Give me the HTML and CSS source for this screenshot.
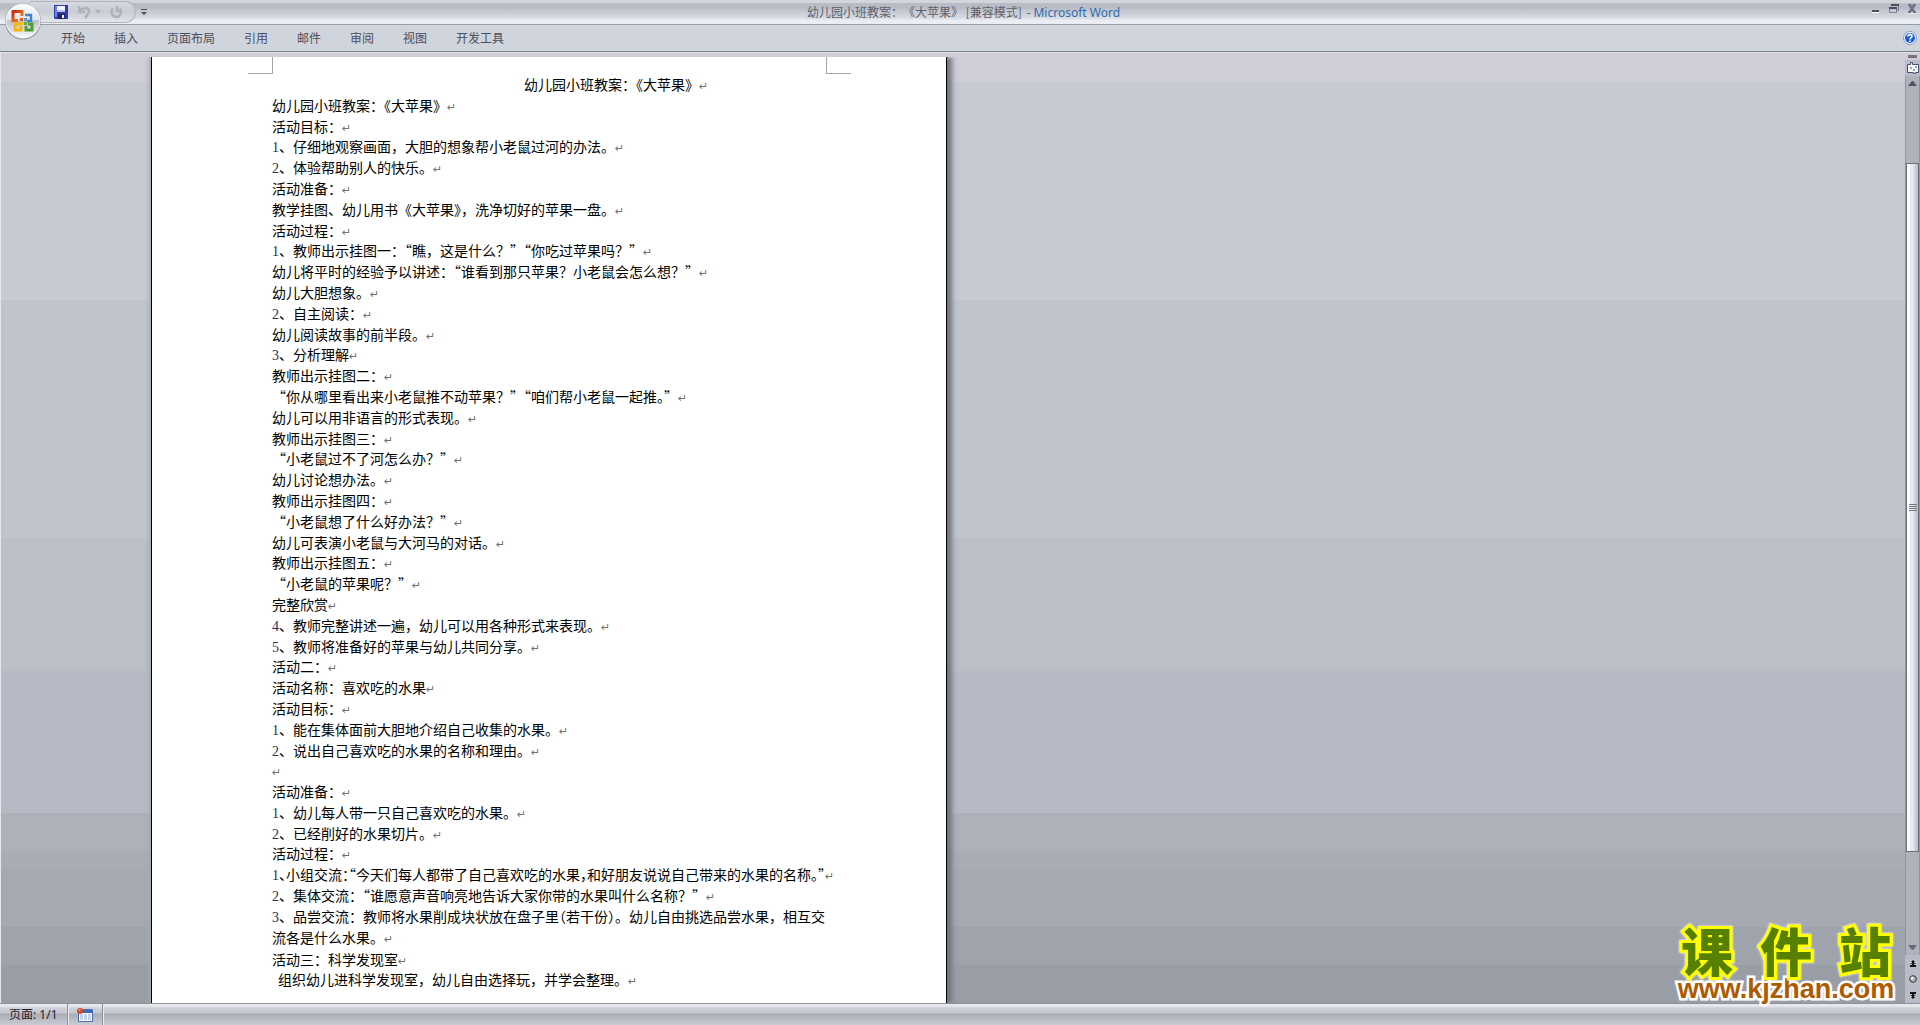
FILE: index.html
```html
<!DOCTYPE html>
<html lang="zh-CN">
<head>
<meta charset="utf-8">
<title>幼儿园小班教案：《大苹果》 [兼容模式] - Microsoft Word</title>
<link rel="stylesheet" href="styles.css">
</head>
<body>
<div class="app">
  <header class="titlebar">
    <div class="quick">
      <button class="tool" aria-label="保存"><svg width="14" height="14" viewBox="0 0 14 14"><path d="M0 0h14v14H1l-1-1z" fill="#2b3ba8"/><path d="M1 1h2v11H1z" fill="#6f82e0"/><path d="M3 1h8v6H3z" fill="#f2f5ff"/><path d="M3 5h8v2H3z" fill="#b9c6f0"/><path d="M4 9h7v5H4z" fill="#1b2468"/><path d="M8 10h2v3H8z" fill="#fff"/></svg></button>
      <button class="tool undo" aria-label="撤消"><svg width="13" height="14" viewBox="0 0 13 14"><path d="M1 1v6h6M1.500 6.500C5 1.500 11 2 11 6c0 3-2 4-4 7" fill="none" stroke="#aeb2bc" stroke-width="2.500"/></svg></button>
      <button class="tool arrow" aria-label="撤消列表"><svg width="6" height="4" viewBox="0 0 6 4"><path d="M0 0h6L3 4z" fill="#aeb2bc"/></svg></button>
      <button class="tool redo" aria-label="重复"><svg width="13" height="14" viewBox="0 0 13 14"><path d="M2.500 3C0 8 3 12 6.500 12S13 7 9.500 3.500M7 1v5h5" fill="none" stroke="#aeb2bc" stroke-width="2.500"/></svg></button>
    </div>
    <button class="tool more" aria-label="自定义快速访问工具栏"><svg width="6" height="7" viewBox="0 0 6 7"><path d="M0 0h6v1H0zM0 3h6L3 6z" fill="#4b4f58"/></svg></button>
    <h1 class="caption">幼儿园小班教案：《大苹果》 [兼容模式] <span class="brand">- Microsoft Word</span></h1>
    <div class="controls">
      <button class="tool" aria-label="最小化"><svg width="10" height="10" viewBox="0 0 10 10"><path d="M1 8h7v1H1z" fill="#fff"/><path d="M1 6h7v2H1z" fill="#4b4e56"/></svg></button>
      <button class="tool" aria-label="还原"><svg width="10" height="10" viewBox="0 0 10 10"><path d="M2.500 1.500h7v5h-2M.5 3.500h7v5h-7z" fill="none" stroke="#7380a0"/><path d="M2 0h8v2H2zM0 3h8v2H0z" fill="#4d505b"/></svg></button>
      <button class="tool" aria-label="关闭"><svg width="10" height="10" viewBox="0 0 10 10"><path d="M1 10h3l1-2 1 2h4" stroke="#fff" fill="none"/><path d="M1 0h3l1 2 1-2h3v1L6.500 4.500 9 8v1H6L5 7 4 9H1V8l2.500-3.500L1 1z" fill="#6b7387"/></svg></button>
    </div>
    <button class="office" aria-label="Office 按钮">
      <svg width="38" height="38" viewBox="0 0 38 38">
        <defs>
          <linearGradient id="orb" x1="0" y1="0" x2="0" y2="1"><stop offset="0" stop-color="#fff"/><stop offset=".45" stop-color="#e4e5ea"/><stop offset=".5" stop-color="#bfc2cb"/><stop offset="1" stop-color="#fafafc"/></linearGradient>
          <linearGradient id="ra" x1="0" y1="0" x2="1" y2="1"><stop offset="0" stop-color="#c8290c"/><stop offset="1" stop-color="#f39021"/></linearGradient>
        </defs>
        <circle cx="19" cy="19.500" r="18" fill="#8c909a"/>
        <circle cx="19" cy="19" r="17" fill="url(#orb)" stroke="#f9f9fb"/>
        <g fill="none" stroke-width="3">
          <path d="M14 18.500H9V9.500h9v4.500" stroke="url(#ra)"/>
          <path d="M21 13h6v6h-4" stroke="#3f86cf" stroke-width="2.400"/>
          <path d="M16 22h-5v6h6v-4" stroke="#f5b512"/>
          <path d="M22 24v4h6v-6h-4" stroke="#4e9c3a"/>
        </g>
        <g><path d="M16 16h3v3h-3z" fill="#e2571b"/><path d="M20 16h3v3h-3z" fill="#5b9bdc"/><path d="M16 20h3v3h-3z" fill="#f3c11a"/><path d="M20 20h3v3h-3z" fill="#63ad45"/></g>
      </svg>
    </button>
  </header>

  <nav class="ribbon">
    <button class="tab">开始</button>
    <button class="tab">插入</button>
    <button class="tab">页面布局</button>
    <button class="tab">引用</button>
    <button class="tab">邮件</button>
    <button class="tab">审阅</button>
    <button class="tab">视图</button>
    <button class="tab">开发工具</button>
    <button class="tool help" aria-label="帮助"><svg width="14" height="14" viewBox="0 0 14 14"><circle cx="7" cy="7" r="6.500" fill="#f4f8ff" stroke="#7f9cc9"/><circle cx="7" cy="7" r="5" fill="#1f5fd6"/><path d="M5 5.500C5 3 9 3 9 5.300 9 6.800 7 6.500 7 8.500M7 9.500v1.500" fill="none" stroke="#fff" stroke-width="1.600"/></svg></button>
  </nav>

  <div class="workspace">
    <main class="desk">
      <article class="page">
        <div class="crop"><i class="corner left"></i><i class="corner right"></i></div>
        <div class="text">
          <p class="heading">幼儿园小班教案：《大苹果》</p>
          <p>幼儿园小班教案：《大苹果》</p>
          <p>活动目标：</p>
          <p><b>1</b>、仔细地观察画面，大胆的想象帮小老鼠过河的办法。</p>
          <p><b>2</b>、体验帮助别人的快乐。</p>
          <p>活动准备：</p>
          <p>教学挂图、幼儿用书《大苹果》，洗净切好的苹果一盘。</p>
          <p>活动过程：</p>
          <p><b>1</b>、教师出示挂图一：“瞧，这是什么？”“你吃过苹果吗？”</p>
          <p>幼儿将平时的经验予以讲述：“谁看到那只苹果？小老鼠会怎么想？”</p>
          <p>幼儿大胆想象。</p>
          <p><b>2</b>、自主阅读：</p>
          <p>幼儿阅读故事的前半段。</p>
          <p><b>3</b>、分析理解</p>
          <p>教师出示挂图二：</p>
          <p>“你从哪里看出来小老鼠推不动苹果？”“咱们帮小老鼠一起推。”</p>
          <p>幼儿可以用非语言的形式表现。</p>
          <p>教师出示挂图三：</p>
          <p>“小老鼠过不了河怎么办？”</p>
          <p>幼儿讨论想办法。</p>
          <p>教师出示挂图四：</p>
          <p>“小老鼠想了什么好办法？”</p>
          <p>幼儿可表演小老鼠与大河马的对话。</p>
          <p>教师出示挂图五：</p>
          <p>“小老鼠的苹果呢？”</p>
          <p>完整欣赏</p>
          <p><b>4</b>、教师完整讲述一遍，幼儿可以用各种形式来表现。</p>
          <p><b>5</b>、教师将准备好的苹果与幼儿共同分享。</p>
          <p>活动二：</p>
          <p>活动名称：喜欢吃的水果</p>
          <p>活动目标：</p>
          <p><b>1</b>、能在集体面前大胆地介绍自己收集的水果。</p>
          <p><b>2</b>、说出自己喜欢吃的水果的名称和理由。</p>
          <p></p>
          <p>活动准备：</p>
          <p><b>1</b>、幼儿每人带一只自己喜欢吃的水果。</p>
          <p><b>2</b>、已经削好的水果切片。</p>
          <p>活动过程：</p>
          <p class="tight"><b>1</b>、小组交流：“今天们每人都带了自己喜欢吃的水果，和好朋友说说自己带来的水果的名称。”</p>
          <p><b>2</b>、集体交流：“谁愿意声音响亮地告诉大家你带的水果叫什么名称？”</p>
          <p class="wrapped"><b>3</b>、品尝交流：教师将水果削成块状放在盘子里<span class="half">（</span>若干份）。幼儿自由挑选品尝水果，相互交<br>流各是什么水果。</p>
          <p>活动三：科学发现室</p>
          <p class="inset">组织幼儿进科学发现室，幼儿自由选择玩，并学会整理。</p>
        </div>
      </article>
      <aside class="watermark">
        <div class="site"><span>课</span><span>件</span><span>站</span></div>
        <div class="url">www.kjzhan.com</div>
      </aside>
    </main>
    <div class="scroll">
      <div class="split"></div>
      <button class="tool ruler" aria-label="标尺"><svg width="12" height="12" viewBox="0 0 12 12"><path d="M.5 2.500h3v-2h2v2h6v8h-3v1h-2v-1h-6z" fill="#f5f7fb" stroke="#46536d"/><path d="M3 6h2M6 8h2M8 5h2" stroke="#46536d"/></svg></button>
      <div class="lane">
        <button class="tool step" aria-label="向上"><svg width="9" height="5" viewBox="0 0 9 5"><path d="M0 5h9L5 0H4z" fill="#50545e"/></svg></button>
        <div class="before"></div>
        <div class="thumb"><i></i><i></i><i></i><i></i></div>
        <div class="after"></div>
        <button class="tool step" aria-label="向下"><svg width="9" height="5" viewBox="0 0 9 5"><path d="M0 0h9L5 5H4z" fill="#636a7b"/></svg></button>
      </div>
      <button class="tool browse" aria-label="前一页"><svg width="6" height="7" viewBox="0 0 6 7"><path d="M3 0l2 2H4v1l2 1H4v1h2v2H0V5h2V4H0l2-1V2H1z" fill="#111"/></svg></button>
      <button class="tool browse" aria-label="选择浏览对象"><svg width="8" height="8" viewBox="0 0 8 8"><circle cx="4" cy="4" r="3.300" fill="#b5b7ba" stroke="#333"/><circle cx="3" cy="3" r="1.300" fill="#fff"/></svg></button>
      <button class="tool browse" aria-label="下一页"><svg width="6" height="7" viewBox="0 0 6 7"><path d="M3 7l2-2H4V4l2-1H4V2h2V0H0v2h2v1H0l2 1v1H1z" fill="#111"/></svg></button>
    </div>
  </div>

  <footer class="status">
    <button class="cell">页面: 1/1</button>
    <button class="cell" aria-label="录制宏"><svg width="16" height="14" viewBox="0 0 16 14"><path d="M1.500 1.500h14v12h-14z" fill="#fff" stroke="#4b6eb0"/><path d="M2 2h13v3H2z" fill="#3667bd"/><path d="M3 7h3M7 7h3M11 7h3M3 9h3M7 9h3M11 9h3M3 11h3M7 11h3M11 11h3" stroke="#8ca5d2"/><circle cx="3" cy="3" r="3" fill="#d3492c"/><circle cx="2.500" cy="2" r="1" fill="#f3a48d"/></svg></button>
  </footer>
</div>
</body>
</html>
```
FILE: styles.css
```css
* { box-sizing: border-box; }
body {
  margin: 0;
  font-family: "Noto Sans CJK SC", sans-serif;
  font-size: 12px;
}
button {
  margin: 0;
  padding: 0;
  border: 0;
  background: none;
  font: inherit;
  color: inherit;
}
svg { display: block; }
.tool { display: flex; align-items: center; justify-content: center; }

.app {
  min-height: 100vh;
  display: flex;
  flex-direction: column;
}

/* title bar */
.titlebar {
  position: relative;
  height: 25px;
  display: flex;
  align-items: flex-start;
  padding-left: 30px;
  border-bottom: 1px solid #989ca6;
  background: linear-gradient(#d2d5db 0 3px, #b9bcc5 3px 8px, #c3c6ce 10px, #d0d3da 15px, #dde0e6 19px, #eaedf3 20px 24px);
}
.quick {
  display: flex;
  align-items: center;
  height: 22px;
  width: 106px;
  margin-top: 1px;
  padding-left: 24px;
  border: 1px solid #b3b6bf;
  border-left: 0;
  border-radius: 0 12px 12px 0;
  background: linear-gradient(#d6d8de, #c9ccd4 50%, #e3e5eb);
}
.undo { margin-left: 10px; }
.arrow { margin-left: 4px; }
.redo { margin-left: 9px; }
.more { width: 16px; height: 24px; }
.caption {
  flex: 1;
  margin: 0;
  padding-right: 96px;
  font-size: 12px;
  font-weight: 400;
  line-height: 24px;
  text-align: center;
  color: #5d616b;
  text-spacing-trim: space-all;
}
.brand {
  padding-left: 2px;
  font-family: "Noto Sans", sans-serif;
  font-size: 12px;
  color: #2f6cab;
}
.controls { display: flex; gap: 8px; padding: 4px 3px 0 0; }
.office { position: absolute; left: 4px; top: 2px; }

/* ribbon */
.ribbon {
  display: flex;
  gap: 29px;
  height: 27px;
  padding: 0 3px 0 61px;
  border-bottom: 1px solid #7a7e86;
  background: #d0d4dd;
  color: #4a4f5c;
}
.tab { line-height: 26px; }
.help { margin-left: auto; }

/* document area */
.workspace {
  flex: 1;
  display: flex;
  border-top: 1px solid #e2e3e9;
  background: linear-gradient(#d0cdd9 0 3%, #c7cad3 3% 26%, #c0c4cd 26% 51%, #bbbfc8 51% 65%, #b7bac4 65% 80%, #aeb1b9 80% 84%, #a9acb4 84% 86%, #a6a9b1 86% 92%, #9fa3ab 92% 96%, #999da5 96%);
}
.desk {
  position: relative;
  flex: 1;
  display: flex;
  padding: 4px 0 0 150px;
  border-left: 1px solid #e6e7ec;
}
.page {
  width: 796px;
  display: flex;
  flex-direction: column;
  padding: 0 119px 13px 120px;
  border: solid #000;
  border-width: 0 1px;
  background: #fff;
  box-shadow: 5px 0 5px #70747c, -2px 0 4px #a5a9b2;
  clip-path: inset(0 -14px 0 -10px);
}
.crop {
  display: flex;
  justify-content: space-between;
  height: 17px;
  margin: 0 -24px;
}
.corner { width: 25px; border-bottom: 1px solid #a5a5a9; }
.left { border-right: 1px solid #a5a5a9; }
.right { border-left: 1px solid #a5a5a9; }
.text {
  flex: 1;
  display: flex;
  flex-direction: column;
  justify-content: space-between;
  font-size: 14px;
  line-height: 20px;
  color: #000;
}
.text p { margin: 0; white-space: nowrap; }
.text p::after {
  content: "↵";
  font-family: "DejaVu Sans", sans-serif;
  font-size: 11px;
  line-height: 0;
  color: #707070;
}
.text b {
  font-family: "Liberation Serif", serif;
  font-weight: 400;
  line-height: 0;
  color: #24304f;
}
.text .heading { padding-left: 252px; }
.text .inset { padding-left: 6px; }
.text .wrapped { line-height: 21px; }
.tight, .half { font-feature-settings: "halt"; text-spacing-trim: space-all; }

/* site mark over the lower right of the desk */
.watermark {
  position: absolute;
  right: 8px;
  bottom: 0;
  width: 222px;
  text-align: center;
}
.site {
  display: flex;
  justify-content: space-between;
  padding: 0 6px;
  font-size: 52px;
  font-weight: 900;
  line-height: 52px;
  color: #588000;
  -webkit-text-stroke: 6px #ffff00;
  paint-order: stroke fill;
  filter: drop-shadow(0 0 1px #fff);
}
.url {
  font-family: "Liberation Sans", sans-serif;
  font-size: 27px;
  font-weight: 700;
  line-height: 27px;
  color: #ae5a00;
  -webkit-text-stroke: 5px #fff;
  paint-order: stroke fill;
}

/* scroll bar */
.scroll {
  width: 15px;
  display: flex;
  flex-direction: column;
  background: #b9bcc6;
}
.split { height: 7px; border: solid #d0cdd9; border-width: 2px 3px; background: #74767c; }
.ruler { height: 16px; }
.lane {
  flex: 1;
  display: flex;
  flex-direction: column;
  border: solid #9295a0;
  border-width: 0 1px;
  background: #afb2bb;
}
.step { height: 15px; }
.before { flex: 72; }
.after { flex: 88; }
.thumb {
  flex: 689;
  display: flex;
  flex-direction: column;
  align-items: center;
  justify-content: center;
  gap: 1px;
  border: 1px solid #6e7078;
  background: linear-gradient(90deg, #fffdf0 0 3px, #e6e9f4 3px 6px, #d0d4e0 8px, #babecb);
}
.thumb i { width: 8px; height: 1px; background: #75777e; }
.browse { height: 16px; }

/* status bar */
.status {
  display: flex;
  height: 22px;
  border-top: 1px solid #8f929a;
  background: linear-gradient(#e6e8ed 0 2px, #cfd2d9 4px, #c4c7cf 9px, #a9acb5 10px, #b8bbc4 15px, #c9ccd4);
  color: #1f222a;
}
.cell {
  padding: 0 9px;
  border-right: 1px solid #8f929a;
  box-shadow: 1px 0 #e6e8ed;
  font-family: "Noto Sans", "Noto Sans CJK SC", sans-serif;
  line-height: 20px;
}
```
